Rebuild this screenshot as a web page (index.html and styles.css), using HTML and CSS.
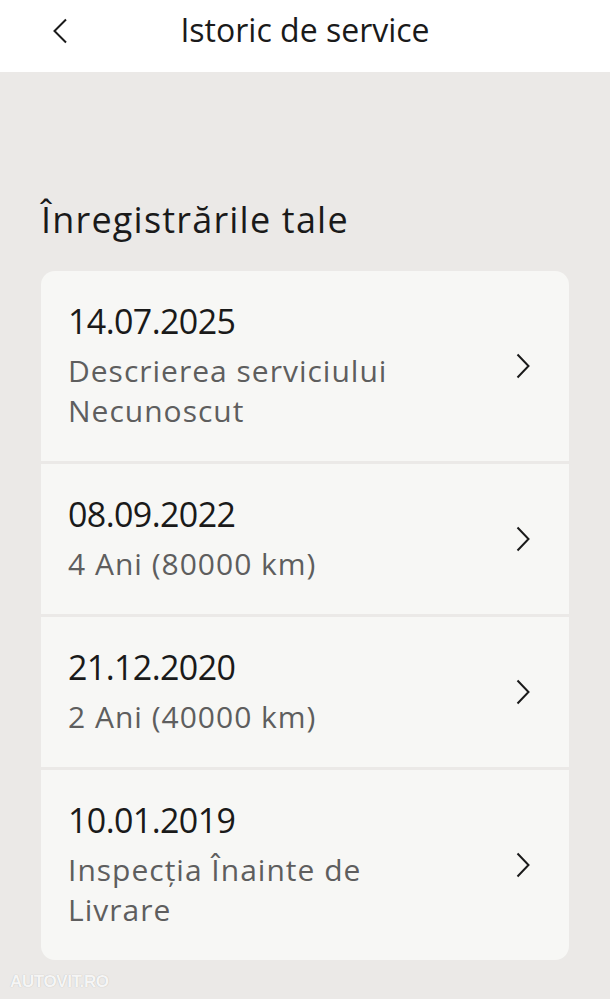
FILE: index.html
```html
<!DOCTYPE html>
<html lang="ro">
<head>
<meta charset="utf-8">
<title>Istoric de service</title>
<link rel="stylesheet" href="styles.css">
</head>
<body>
<div class="page">
  <header class="topbar">
    <button class="back" aria-label="Înapoi">
      <svg width="16" height="26" viewBox="0 0 16 26"><path d="M14 1.5 L2.5 13 L14 24.5" fill="none" stroke="#1a1a1a" stroke-width="2"/></svg>
    </button>
    <h1 class="title">Istoric de service</h1>
  </header>
  <main class="content">
    <h2 class="section-title">Înregistrările tale</h2>
    <ul class="records">
      <li class="record">
        <div class="record-text">
          <div class="date">14.07.2025</div>
          <div class="desc">Descrierea serviciului<br>Necunoscut</div>
        </div>
        <svg class="chev" width="14" height="26" viewBox="0 0 14 26"><path d="M1.5 1.5 L12.5 13 L1.5 24.5" fill="none" stroke="#1a1a1a" stroke-width="2"/></svg>
      </li>
      <li class="record">
        <div class="record-text">
          <div class="date">08.09.2022</div>
          <div class="desc">4 Ani (80000 km)</div>
        </div>
        <svg class="chev" width="14" height="26" viewBox="0 0 14 26"><path d="M1.5 1.5 L12.5 13 L1.5 24.5" fill="none" stroke="#1a1a1a" stroke-width="2"/></svg>
      </li>
      <li class="record">
        <div class="record-text">
          <div class="date">21.12.2020</div>
          <div class="desc">2 Ani (40000 km)</div>
        </div>
        <svg class="chev" width="14" height="26" viewBox="0 0 14 26"><path d="M1.5 1.5 L12.5 13 L1.5 24.5" fill="none" stroke="#1a1a1a" stroke-width="2"/></svg>
      </li>
      <li class="record">
        <div class="record-text">
          <div class="date">10.01.2019</div>
          <div class="desc">Inspecția Înainte de<br>Livrare</div>
        </div>
        <svg class="chev" width="14" height="26" viewBox="0 0 14 26"><path d="M1.5 1.5 L12.5 13 L1.5 24.5" fill="none" stroke="#1a1a1a" stroke-width="2"/></svg>
      </li>
    </ul>
    <div class="watermark">AUTOVIT.RO</div>
  </main>
</div>
</body>
</html>
```

FILE: styles.css
```css
* { box-sizing: border-box; }
html, body { margin: 0; padding: 0; }
body {
  background: #ebe9e7;
  font-family: "Open Sans", "Noto Sans", sans-serif;
  color: #1a1a1a;
  width: 610px;
  height: 999px;
  overflow: hidden;
}
.page { display: flex; flex-direction: column; height: 999px; }
.topbar {
  height: 72px;
  background: #ffffff;
  display: flex;
  align-items: flex-start;
  justify-content: center;
  padding-top: 10px;
  position: relative;
}
.back {
  position: absolute;
  left: 52px;
  top: 18px;
  border: 0;
  background: none;
  padding: 0;
  display: flex;
}
.title {
  margin: 0;
  font-size: 32px;
  font-weight: 400;
  line-height: 40px;
}
.content {
  flex: 1;
  padding: 124px 41px 0 41px;
  display: flex;
  flex-direction: column;
  position: relative;
}
.section-title {
  margin: 0 0 27px 0;
  font-size: 36px;
  font-weight: 400;
  line-height: 48px;
  letter-spacing: 1.2px;
}
.records {
  list-style: none;
  margin: 0;
  padding: 0;
  display: flex;
  flex-direction: column;
  gap: 3px;
  border-radius: 14px;
  overflow: hidden;
}
.record {
  background: #f7f7f5;
  display: flex;
  align-items: center;
  padding: 30px 39px 30px 27px;
}
.record-text { flex: 1; display: flex; flex-direction: column; gap: 10px; }
.date { font-size: 34px; line-height: 40px; letter-spacing: -0.6px; }
.desc { font-size: 30px; line-height: 40px; color: #5e5e5e; letter-spacing: 1px; }
.chev { flex: none; }
.watermark {
  position: absolute;
  left: 10px;
  bottom: 7px;
  font-family: "Liberation Sans", sans-serif;
  font-weight: 700;
  font-size: 17px;
  color: rgba(255,255,255,0.9);
  text-shadow: 0 0 1px rgba(0,0,0,0.25);
  letter-spacing: -0.4px;
}
```
